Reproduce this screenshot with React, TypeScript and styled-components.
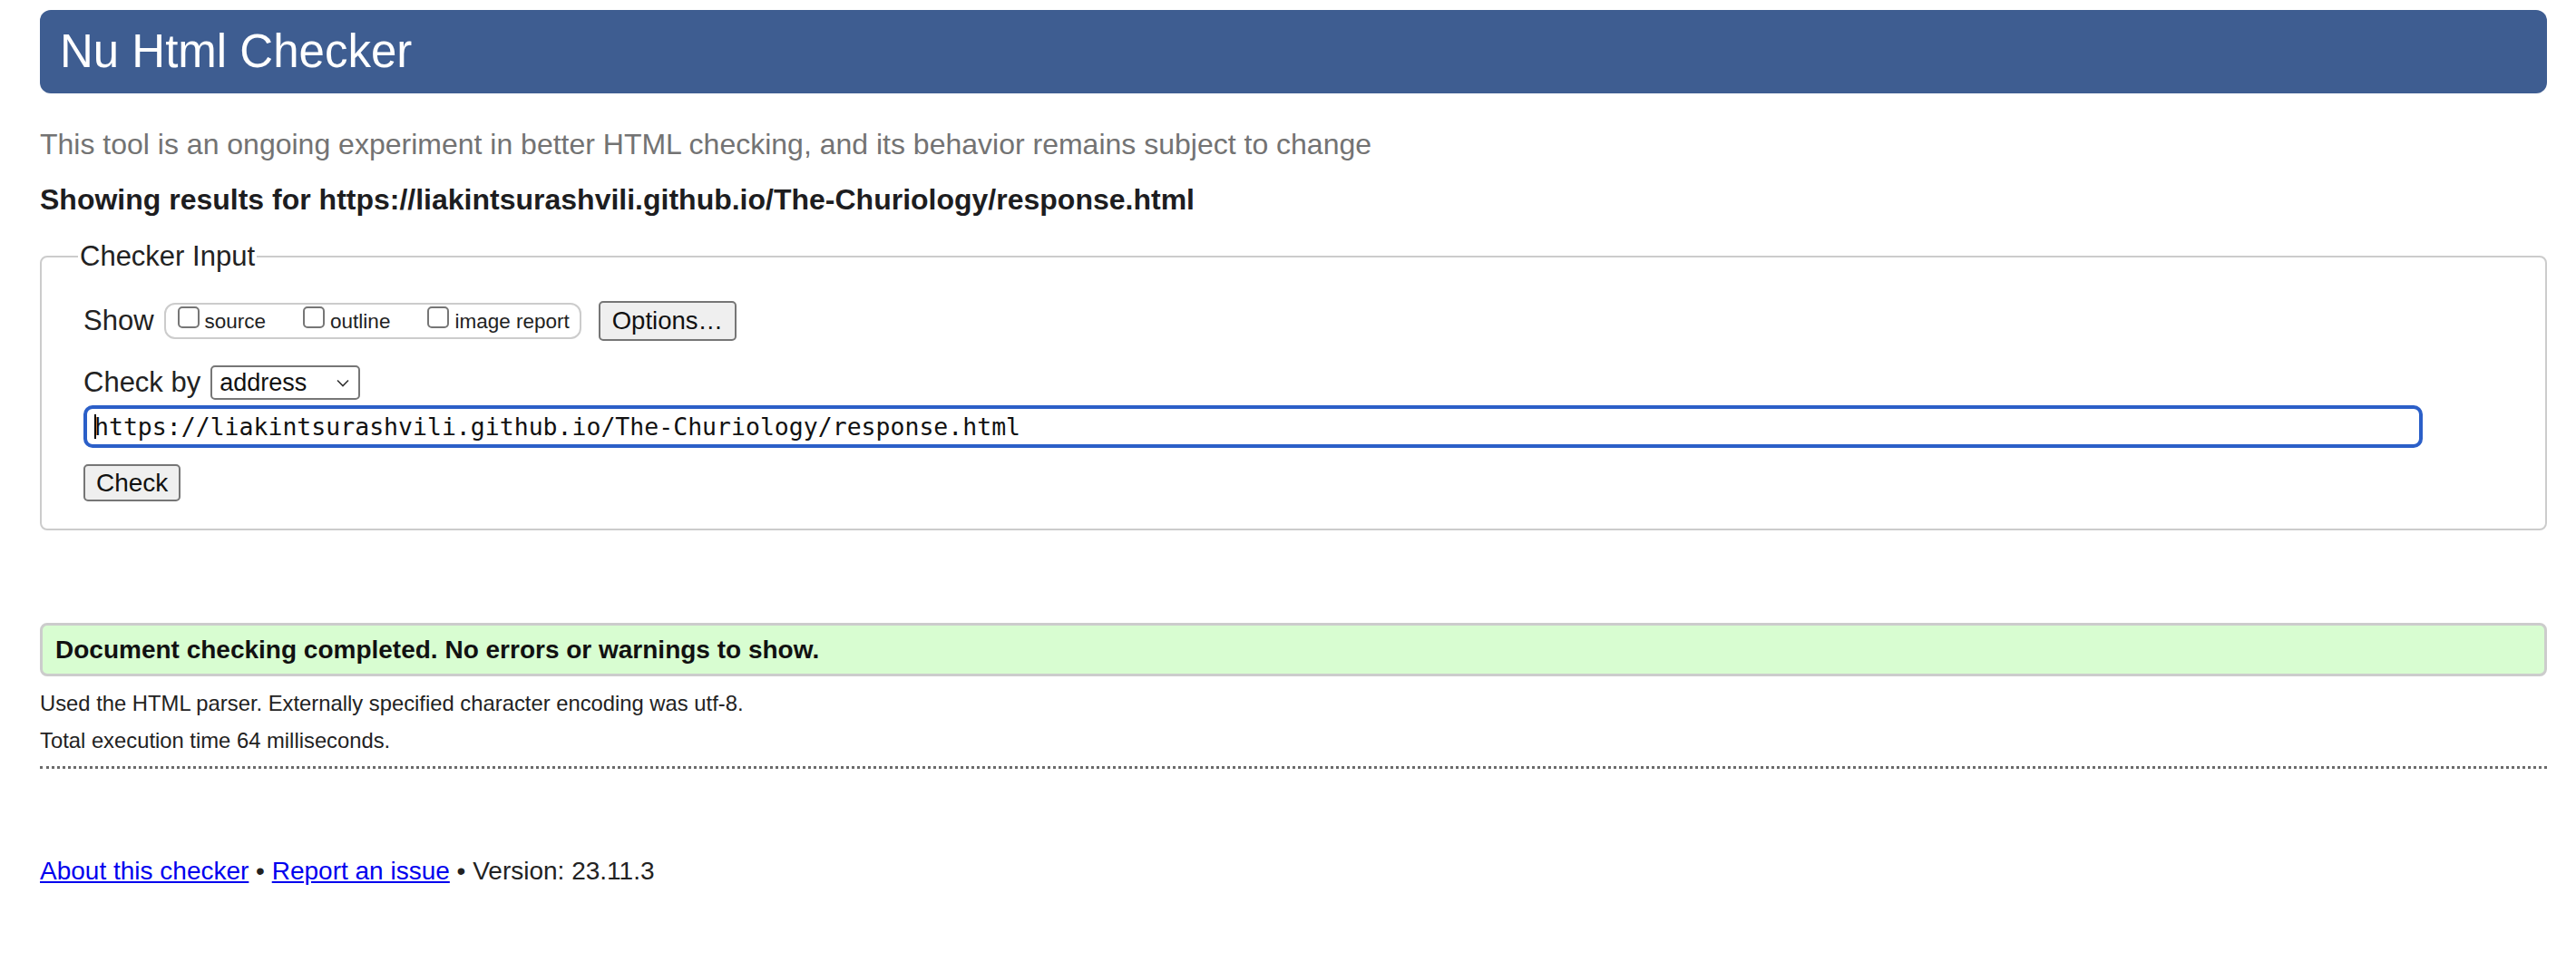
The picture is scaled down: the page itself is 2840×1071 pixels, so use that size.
import React from 'react'
import styled, { createGlobalStyle } from 'styled-components'

const GlobalStyle = createGlobalStyle`
  html, body {
    margin: 0;
    padding: 0;
    background: #fff;
  }
  body {
    font-family: "Liberation Sans", Arial, Helvetica, sans-serif;
    color: #222;
  }
`

const URL = 'https://liakintsurashvili.github.io/The-Churiology/response.html'

const Page = styled.div`
  padding: 11px 32px 40px 44px;
`

const Banner = styled.h1`
  margin: 0;
  height: 92px;
  line-height: 92px;
  padding: 0 22px;
  background: #3e5d91;
  border-radius: 12px;
  color: #fff;
  font-size: 51px;
  font-weight: 400;
`

const Intro = styled.p`
  margin: 36px 0 0;
  font-size: 32px;
  line-height: 40px;
  color: #737373;
`

const ResultsFor = styled.h2`
  margin: 21px 0 0;
  font-size: 32px;
  line-height: 40px;
  font-weight: 700;
  color: #1d1d1f;
`

const InputSet = styled.fieldset`
  margin: 25px 0 0;
  padding: 31px 44px 30px 46px;
  border: 2px solid #cccccc;
  border-radius: 8px;
  min-width: 0;
`

const Legend = styled.legend`
  margin-left: -6px;
  padding: 0 2px;
  font-size: 31px;
  line-height: 36px;
`

const Row = styled.div<{ $top?: number }>`
  display: flex;
  align-items: center;
  margin-top: ${p => p.$top ?? 0}px;
`

const RowLabel = styled.span`
  font-size: 31px;
  line-height: 38px;
  margin-right: 11px;
`

const ShowGroup = styled.div`
  box-sizing: border-box;
  display: flex;
  align-items: baseline;
  height: 40px;
  padding: 0 11px 0 13px;
  border: 2px solid #cccccc;
  border-radius: 12px;
`

const Box = styled.input.attrs({ type: 'checkbox' })`
  appearance: none;
  box-sizing: border-box;
  width: 24px;
  height: 24px;
  margin: 0 6px 0 0;
  border: 2px solid #767676;
  border-radius: 5px;
  background: #fff;
`

const BoxLabel = styled.label<{ $last?: boolean }>`
  display: inline-flex;
  align-items: baseline;
  font-size: 22.5px;
  line-height: 37px;
  margin-right: ${p => (p.$last ? 0 : 41)}px;
`

const Button = styled.button<{ $h: number; $fs: number; $px: number }>`
  box-sizing: border-box;
  height: ${p => p.$h}px;
  padding: 0 ${p => p.$px}px;
  border: 2px solid #767676;
  border-radius: 5px;
  background: #efefef;
  color: #111;
  font-family: "Liberation Sans", Arial, sans-serif;
  font-size: ${p => p.$fs}px;
`

const OptionsButton = styled(Button)`
  margin-left: 19px;
`

const SelectWrap = styled.div`
  position: relative;
  width: 165px;
  height: 38px;
`

const Select = styled.select`
  appearance: none;
  box-sizing: border-box;
  width: 100%;
  height: 100%;
  padding: 0 0 0 8px;
  border: 2px solid #767676;
  border-radius: 5px;
  background: #fff;
  color: #111;
  font-family: "Liberation Sans", Arial, sans-serif;
  font-size: 27px;
`

const Chevron = styled.svg`
  position: absolute;
  right: 12px;
  top: 15px;
  pointer-events: none;
`

const UrlWrap = styled.div`
  position: relative;
  margin-top: 6px;
`

const UrlField = styled.input`
  box-sizing: border-box;
  display: block;
  width: 2579px;
  height: 47px;
  padding: 0 8px;
  border: 4px solid #2b5fc8;
  border-radius: 10px;
  outline: none;
  font-family: "DejaVu Sans Mono", "Liberation Mono", monospace;
  font-size: 26.5px;
  color: #111;
`

const Caret = styled.span`
  position: absolute;
  left: 12px;
  top: 10px;
  width: 2px;
  height: 27px;
  background: #000;
`

const SubmitRow = styled.div`
  margin-top: 18px;
`

const Success = styled.p`
  box-sizing: border-box;
  margin: 102px 0 0;
  height: 59px;
  padding: 0 14px;
  border: 3px solid #cccccc;
  border-radius: 8px;
  background: #d8fdd1;
  font-size: 28px;
  font-weight: 700;
  line-height: 53px;
  color: #111;
`

const Detail = styled.p<{ $top: number }>`
  margin: ${p => p.$top}px 0 0;
  font-size: 23.8px;
  line-height: 30px;
  color: #222;
`

const Rule = styled.hr`
  margin: 13px 0 0;
  border: 0;
  border-top: 3px dotted #6b6b6b;
  height: 0;
`

const Footer = styled.p`
  margin: 96px 0 0;
  font-size: 28px;
  line-height: 34px;
  color: #222;
`

const FootLink = styled.a`
  color: #0000ee;
  text-decoration: underline;
`

export default function App() {
  return (
    <>
      <GlobalStyle />
      <Page>
        <Banner>Nu Html Checker</Banner>
        <Intro>
          This tool is an ongoing experiment in better HTML checking, and its behavior remains subject to change
        </Intro>
        <ResultsFor>Showing results for {URL}</ResultsFor>

        <InputSet>
          <Legend>Checker Input</Legend>
          <Row>
            <RowLabel>Show</RowLabel>
            <ShowGroup>
              <BoxLabel>
                <Box />
                source
              </BoxLabel>
              <BoxLabel>
                <Box />
                outline
              </BoxLabel>
              <BoxLabel $last>
                <Box />
                image report
              </BoxLabel>
            </ShowGroup>
            <OptionsButton $h={44} $fs={27.5} $px={13}>
              Options…
            </OptionsButton>
          </Row>
          <Row $top={27}>
            <RowLabel>Check by</RowLabel>
            <SelectWrap>
              <Select defaultValue="address">
                <option value="address">address</option>
                <option value="file">file upload</option>
                <option value="text">text input</option>
              </Select>
              <Chevron width="14" height="9" viewBox="0 0 14 9">
                <path d="M1 1.5 L7 7.5 L13 1.5" fill="none" stroke="#333" strokeWidth="1.6" />
              </Chevron>
            </SelectWrap>
          </Row>
          <UrlWrap>
            <UrlField defaultValue={URL} spellCheck={false} />
            <Caret />
          </UrlWrap>
          <SubmitRow>
            <Button $h={41} $fs={28} $px={12}>
              Check
            </Button>
          </SubmitRow>
        </InputSet>

        <Success>Document checking completed. No errors or warnings to show.</Success>
        <Detail $top={15}>Used the HTML parser. Externally specified character encoding was utf-8.</Detail>
        <Detail $top={11}>Total execution time 64 milliseconds.</Detail>
        <Rule />

        <Footer>
          <FootLink href="#about">About this checker</FootLink> • <FootLink href="#issue">Report an issue</FootLink> •
          Version: 23.11.3
        </Footer>
      </Page>
    </>
  )
}
